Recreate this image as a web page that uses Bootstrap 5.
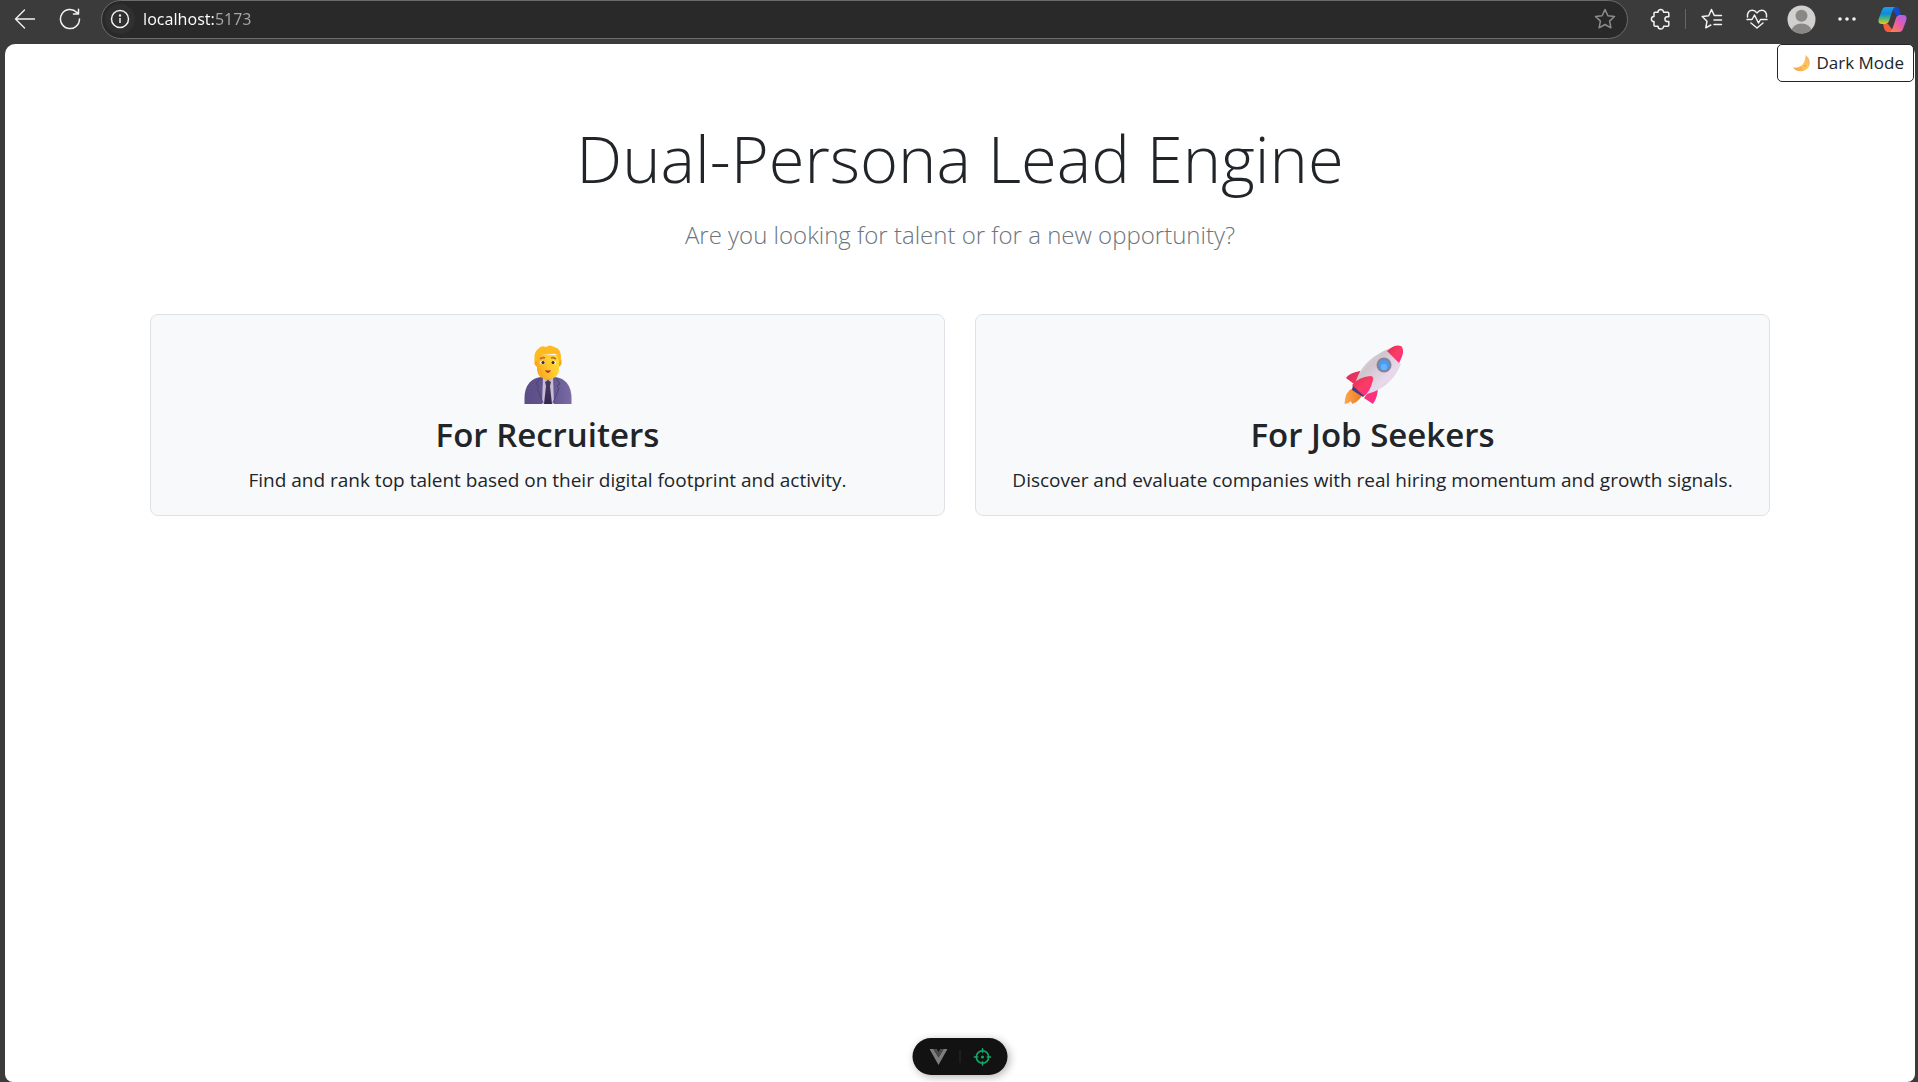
<!DOCTYPE html>
<html lang="en">
<head>
<meta charset="utf-8">
<meta name="viewport" content="width=device-width, initial-scale=1">
<title>Dual-Persona Lead Engine</title>
<link href="https://cdn.jsdelivr.net/npm/bootstrap@5.3.0/dist/css/bootstrap.min.css" rel="stylesheet">
<style>
  html { font-size: 20px; }
  body { font-family: "Open Sans", "Noto Sans", sans-serif; background: #3b3b3b; }
  .toolbar { height: 44px; padding: 0 2px 6px; }
  .tool-btn { width: 45px; height: 38px; padding: 0; border: 0; background: none; color: #f2f2f2; display: flex; align-items: center; justify-content: center; }
  .copilot-btn { width: 47px; }
  .address { height: 39px; margin: 0 10px 0 9px; padding: 0 7px 0 3px; background: #292929; border: 1px solid #6b6b6b; border-radius: 20px; min-width: 0; }
  .address .tool-btn { width: 30px; height: 30px; flex: none; }
  .address .info-btn { background: #303030; border-radius: 50%; }
  .address input { border: 0; outline: 0; padding: 0; margin-left: 8px; min-width: 0; font-family: "Noto Sans", "Open Sans", sans-serif; font-size: 16px; color: #fff;
    background: linear-gradient(90deg, #fff 72px, #a6a6a6 72px); -webkit-background-clip: text; background-clip: text; -webkit-text-fill-color: transparent; }
  .tool-rule { width: 1px; height: 20px; margin: 0 3px 0 2px; background: #666; }
  .viewport { margin: 0 3px 0 5px; background: #fff; border-radius: 10px 10px 8px 8px; }
  .mode-btn { font-size: 17px; line-height: 26px; padding: 5px 9px; gap: 6px; border-color: #212529; color: #212529; background: #fff; border-radius: 5px; margin-right: 1px; }
  .persona-page { max-width: 1650px; }
  .hero-title { font-size: 65px; line-height: 92px; font-weight: 300; margin-bottom: 12px; }
  .hero-lead { font-size: 24px; line-height: 38px; font-weight: 300; color: #6c757d; }
  .persona { background: #f8f9fa; border: 1px solid #dee2e6; border-radius: 8px; }
  .persona h2 { font-size: 33px; line-height: 45px; font-weight: 600; margin-bottom: 8px; }
  .persona p { font-size: 19px; line-height: 30px; }
  .persona svg { display: block; margin: 10px auto 7px; }
  .devtools { bottom: 7px; height: 37px; width: 95px; margin-left: 1px; border-radius: 19px; background: #121212; box-shadow: 2px 2px 8px rgba(0,0,0,.3); }
  .devtools button { border: 0; padding: 0; background: none; width: 43px; display: flex; justify-content: center; }
  .devtools span { width: 1px; height: 13px; background: #2b2b2b; }
</style>
</head>
<body class="min-vh-100 d-flex flex-column">
<header class="toolbar d-flex align-items-center">
  <button class="tool-btn" aria-label="Back"><svg width="22" height="22" viewBox="0 0 22 22" fill="none" stroke="currentColor" stroke-width="1.4" stroke-linecap="round" stroke-linejoin="round"><path d="M20.500 11H1.500M10.500 2L1.500 11l9 9"/></svg></button>
  <button class="tool-btn" aria-label="Refresh"><svg width="22" height="22" viewBox="0 0 22 22" fill="none" stroke="currentColor" stroke-width="1.500" stroke-linecap="round" stroke-linejoin="round"><path d="M20.500 11A9.500 9.500 0 1 1 17.800 4.400L19.500 6M19.500 1.300V6h-5"/></svg></button>
  <div class="address d-flex flex-grow-1 align-items-center">
    <button class="tool-btn info-btn" aria-label="Site information"><svg width="20" height="20" viewBox="0 0 20 20" fill="none" stroke="currentColor" stroke-width="1.500"><circle cx="10" cy="10" r="8.500"/><path d="M10 9v5"/><circle cx="10" cy="6.500" r=".5"/></svg></button>
    <input class="flex-grow-1" type="text" aria-label="Address" value="localhost:5173">
    <button class="tool-btn" aria-label="Add to favorites"><svg width="22" height="22" viewBox="0 0 22 22" fill="none" stroke="#8c8c8c" stroke-width="1.500" stroke-linejoin="round"><path d="M11 1.500l2.900 6.200 6.600.8-4.900 4.600 1.300 6.700L11 16.500l-5.900 3.300 1.300-6.700L1.500 8.500l6.600-.8z"/></svg></button>
  </div>
  <button class="tool-btn" aria-label="Extensions"><svg width="22" height="22" viewBox="0 0 22 22" fill="none" stroke="currentColor" stroke-width="1.500" stroke-linejoin="round"><path d="M4 5.200q0-1 1-1h3a2.800 2.800 0 0 1 5.600 0h4.200q1 0 1 1v3.600h-1.500a2.400 2.400 0 0 0 0 4.800h1.500v3.600q0 1-1 1h-4.200a2.800 2.800 0 0 1-5.600 0H5q-1 0-1-1v-3.600a2.600 2.600 0 0 1 0-5.200z"/></svg></button>
  <span class="tool-rule"></span>
  <button class="tool-btn" aria-label="Favorites"><svg width="22" height="22" viewBox="0 0 22 22" fill="none" stroke="currentColor" stroke-width="1.500" stroke-linejoin="round" stroke-linecap="round"><path d="M20.500 7.500h-7.200L10.500 1.500 7.700 7.700 1.200 8.500l4.800 4.700-1.200 6.600 5-2.800M13 12h7.500M13 16.500h7.500"/></svg></button>
  <button class="tool-btn" aria-label="Browser essentials"><svg width="22" height="22" viewBox="0 0 22 22" fill="none" stroke="currentColor" stroke-width="1.500" stroke-linejoin="round" stroke-linecap="round"><path d="M1.500 9C.8 4.500 3.500 2.200 6.200 2.200c2.200 0 3.700 1.200 4.800 2.700 1.100-1.500 2.600-2.700 4.800-2.700 2.700 0 5.400 2.300 4.700 6.800M1 11.500h5L8.500 7l4 8 2-3.500H21M5 15l6 5 6-5"/></svg></button>
  <button class="tool-btn" aria-label="Profile"><svg width="29" height="29" viewBox="0 0 29 29"><defs><clipPath id="pc"><circle cx="14.500" cy="14.500" r="14"/></clipPath></defs><g clip-path="url(#pc)"><path fill="#d2d0ce" d="M0 0h29v29H0z"/><circle cx="14.500" cy="10.700" r="6" fill="#8a8886"/><ellipse cx="14.500" cy="26" rx="10" ry="7.500" fill="#8a8886"/></g></svg></button>
  <button class="tool-btn" aria-label="More"><svg width="20" height="6" viewBox="0 0 20 6" fill="currentColor"><circle cx="3" cy="3" r="1.800"/><circle cx="10" cy="3" r="1.800"/><circle cx="17" cy="3" r="1.800"/></svg></button>
  <button class="tool-btn copilot-btn" aria-label="Copilot"><svg width="29" height="27" viewBox="0 0 29 27"><defs>
    <linearGradient id="ca" x1="0" y1="0" x2="0" y2="1"><stop offset="0" stop-color="#1b9df5"/><stop offset=".4" stop-color="#1389d8"/><stop offset=".7" stop-color="#4bbd78"/><stop offset="1" stop-color="#f5c518"/></linearGradient>
    <linearGradient id="cb" x1="1" y1="0" x2="0" y2="1"><stop offset="0" stop-color="#a463f2"/><stop offset=".5" stop-color="#e75ba8"/><stop offset="1" stop-color="#ff8a3c"/></linearGradient></defs>
    <path fill="#1849c6" d="M13 1h5q3 0 4 4l1 4h-5z"/><path fill="url(#ca)" d="M8 1h9q-2 1-3 5l-3 9q-1 3-4 3H4q-5 0-3-6l3-8q1-3 4-3z"/>
    <path fill="#f45d3c" d="M16 26h-6q-3 0-4-4l-1-4h5z"/><path fill="url(#cb)" d="M21 26h-9q2-1 3-5l3-9q1-3 4-3h3q5 0 3 6l-3 8q-1 3-4 3z"/></svg></button>
</header>

<main class="viewport flex-grow-1">
  <div class="d-flex justify-content-end">
    <button class="btn mode-btn d-flex align-items-center"><svg class="ms-1" width="18" height="18" viewBox="0 0 18 18" role="img" aria-label="Moon"><defs><linearGradient id="mg" x1="0" y1="1" x2="1" y2="0"><stop offset="0" stop-color="#f09a50"/><stop offset=".5" stop-color="#ffc85a"/><stop offset="1" stop-color="#efb070"/></linearGradient></defs><path fill="url(#mg)" d="M13.500 1C19.500 5 19 13 13.500 16 8.500 18.600 3 17 1 13.300c4 1 8-.3 10.300-3.800 1.800-2.800 2.200-5.500 2.200-8.500z"/><circle cx="13" cy="12" r="1" fill="#e9a144"/><circle cx="9" cy="14" r=".7" fill="#e9a144"/></svg>Dark Mode</button>
  </div>
  <div class="container persona-page text-center px-0 py-4">
    <h1 class="hero-title">Dual-Persona Lead Engine</h1>
    <p class="hero-lead mb-5">Are you looking for talent or for a new opportunity?</p>
    <div class="row justify-content-center mx-0">
      <div class="col-md-6">
        <div class="card persona h-100"><div class="card-body">
          <svg width="60" height="60" viewBox="0 0 60 60" role="img" aria-label="Office worker"><defs>
            <linearGradient id="suit"><stop offset="0" stop-color="#5b4d85"/><stop offset=".65" stop-color="#665a92"/><stop offset="1" stop-color="#7d6ba5"/></linearGradient>
            <linearGradient id="skin" x1="0" x2="1" y1=".7" y2=".2"><stop offset="0" stop-color="#f8a51c"/><stop offset=".6" stop-color="#ffce2e"/><stop offset="1" stop-color="#ffdc3a"/></linearGradient>
            <linearGradient id="tie" y1="0" y2="1" x2="0"><stop offset="0" stop-color="#4a3a62"/><stop offset="1" stop-color="#342850"/></linearGradient></defs>
            <path fill="url(#suit)" d="M6.500 59V53Q7 34 23 32h14q16 2 16.500 21v6z"/>
            <path fill="#c9bdd6" d="M25 32h10l1 27H24z"/><path fill="#e8a020" d="M24 27h12v5l-6 4-6-4z"/>
            <path fill="url(#tie)" d="M27 37l3-2 3 2-1 4 2 18h-8l2-18z"/>
            <path d="M22 33l-4 6 3 2-2 2 6 15M38 33l4 6-3 2 2 2-6 15" stroke="#4f4276" stroke-width="1" fill="none"/>
            <path fill="#f9a51b" d="M17 14q-2 5 2 8l2-1V14zM43 14q2 5-2 8l-2-1V14z"/>
            <path fill="url(#skin)" d="M19 10h22v15q-1 9-11 9t-11-9z"/>
            <path fill="#ffba20" d="M17 17Q15 8 20 4q3-4 8-2 4-3 8 0 5 1 6 5 2 5 0 10l-2-3Q40 8 34 9l-11 1q-4 1-3 5z"/>
            <path d="M22 14q3-2 5-1M33 13q2-1 5 1" stroke="#c96730" stroke-width="1.700" fill="none"/>
            <ellipse cx="24.500" cy="17.500" rx="2.600" ry="1.800" fill="#fff"/><ellipse cx="35.500" cy="17.500" rx="2.600" ry="1.800" fill="#fff"/><circle cx="25" cy="17.500" r="1.600" fill="#352536"/><circle cx="35" cy="17.500" r="1.600" fill="#352536"/>
            <path fill="#b92b48" d="M27 25q3 1 6 0-1 3-3 3t-3-3z"/></svg>
          <h2>For Recruiters</h2>
          <p class="mb-0">Find and rank top talent based on their digital footprint and activity.</p>
        </div></div>
      </div>
      <div class="col-md-6">
        <div class="card persona h-100"><div class="card-body">
          <svg width="60" height="60" viewBox="0 0 60 60" role="img" aria-label="Rocket"><defs>
            <linearGradient id="hull" x1="0" y1="0" x2="1" y2="1"><stop offset="0" stop-color="#f2edf4"/><stop offset=".35" stop-color="#cfc5cd"/><stop offset=".65" stop-color="#e6d9ea"/><stop offset="1" stop-color="#e9cdef"/></linearGradient>
            <linearGradient id="red" x1="0" y1="0" x2="1" y2="1"><stop offset="0" stop-color="#d92b58"/><stop offset=".5" stop-color="#fb3c64"/><stop offset="1" stop-color="#ff2891"/></linearGradient>
            <linearGradient id="fire"><stop offset="0" stop-color="#ffa64d"/><stop offset="1" stop-color="#e87820"/></linearGradient></defs>
            <path fill="url(#fire)" d="M10 43q-8 3-8.500 16l4-1 2-2 2 3q9-4 10-11z"/>
            <path fill="#443c82" d="M10 40l13 9-3 3-11-7z"/>
            <path fill="url(#red)" d="M17 26Q6 28 3 33l8 6 8-3zM35 41q0 11-5 18l-9-6 6-8z"/>
            <path fill="url(#hull)" d="M12 40Q17 16 45 4l13 15Q48 43 24 49z"/>
            <path fill="url(#red)" d="M44 6Q52-1 58 1q5 4-2 17z"/>
            <path fill="url(#red)" d="M9 40q7-8 18-9 4 0 3 4-3 12-9 16z"/>
            <circle cx="41" cy="20" r="7.500" fill="#85839b"/><circle cx="41" cy="20" r="5.300" fill="#4a9cf0"/><circle cx="41" cy="22" r="3.200" fill="#62b4ff"/></svg>
          <h2>For Job Seekers</h2>
          <p class="mb-0">Discover and evaluate companies with real hiring momentum and growth signals.</p>
        </div></div>
      </div>
    </div>
  </div>
</main>

<div class="devtools position-fixed start-50 translate-middle-x d-flex align-items-center justify-content-center">
  <button aria-label="Toggle devtools"><svg width="18" height="16" viewBox="0 0 18 16"><path fill="#7d7d7d" d="M0 0h4l5 8.500L14 0h4L9 16z"/><path fill="#4b4b4b" d="M4 0h3.300L9 3l1.700-3H14L9 8.500z"/></svg></button>
  <span></span>
  <button aria-label="Inspect component"><svg width="18" height="18" viewBox="0 0 18 18" fill="none" stroke="#12a866" stroke-width="1.600" stroke-linecap="round"><circle cx="9" cy="9" r="6.200"/><path d="M9 .9v3.300M9 13.800v3.300M.9 9h3.300M13.800 9h3.300"/><circle cx="9" cy="9" r=".7" fill="#12a866"/></svg></button>
</div>
<script src="https://cdn.jsdelivr.net/npm/bootstrap@5.3.0/dist/js/bootstrap.bundle.min.js"></script>
</body>
</html>
